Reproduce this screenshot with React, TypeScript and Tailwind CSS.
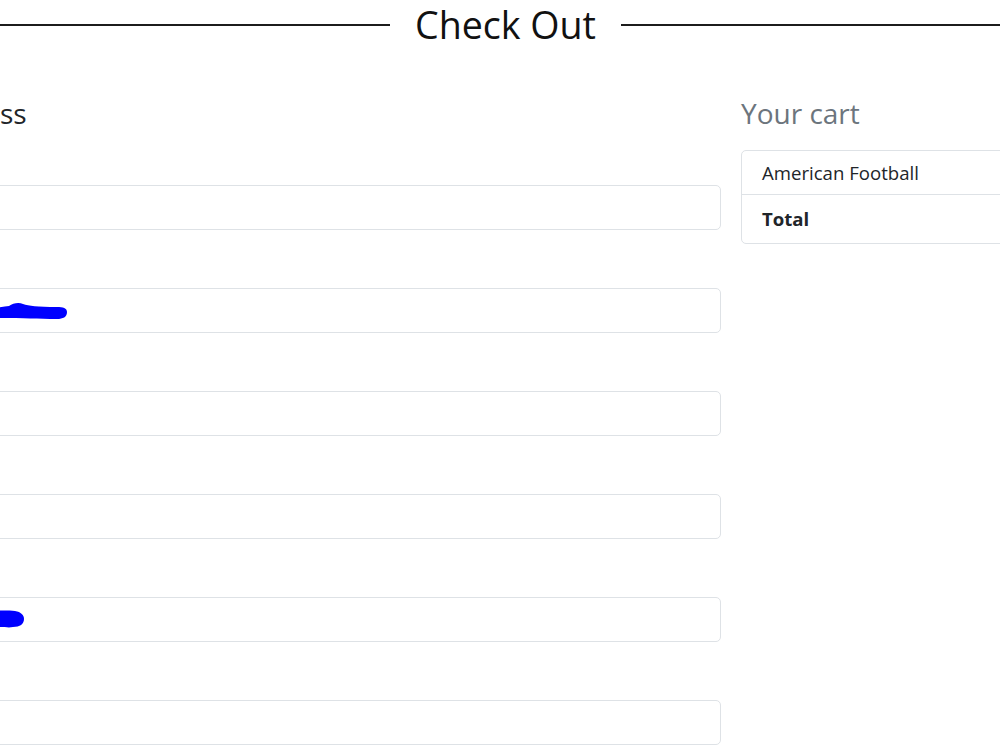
import React from "react";

const fields = [
  { id: "name", label: "Full name", scribble: null },
  { id: "email", label: "Email", scribble: "long" },
  { id: "address", label: "Address", scribble: null },
  { id: "city", label: "City", scribble: null },
  { id: "phone", label: "Phone", scribble: "short" },
  { id: "zip", label: "Zip", scribble: null },
];

function Scribble({ kind }: { kind: string }) {
  // blue pen marks drawn over redacted values
  if (kind === "long") {
    return (
      <svg className="absolute left-[120px] top-[12px]" width="120" height="26" viewBox="0 0 120 26">
        <path
          d="M0 10 C20 9 40 8 52 6 C56 3 62 2 66 4 C72 6 80 7 100 7 C106 7 110 8 110 12 C110 17 106 19 100 19 C80 19 66 18 40 18 C20 18 8 18 0 18 Z"
          fill="#0000ff"
        />
      </svg>
    );
  }
  return (
    <svg className="absolute left-[120px] top-[12px]" width="80" height="22" viewBox="0 0 80 22">
      <path
        d="M0 3 C20 2 48 1 58 2 C64 3 67 6 67 10 C67 15 63 18 56 18 C52 19 48 18 40 18 C20 18 8 18 0 18 Z"
        fill="#0000ff"
      />
    </svg>
  );
}

export default function App() {
  return (
    <div className="w-[1000px] h-[750px] overflow-hidden bg-white text-[#212529] font-['Open_Sans','Noto_Sans',sans-serif]">
      <div className="flex items-center h-[49px] gap-[25px]">
        <div className="w-[390px] shrink-0 h-[2px] bg-[#1c1c1c]" />
        <h1 className="text-[37.6px] leading-none font-normal text-[#111]">Check Out</h1>
        <div className="flex-1 h-[2px] bg-[#1c1c1c]" />
      </div>

      <div className="flex gap-[20px] ml-[-163px] mt-[47px]">
        <div className="w-[884px] shrink-0">
          <h4 className="text-[28px] leading-[34px] font-medium">Billing address</h4>
          <div className="flex flex-col mt-[-3px]">
            {fields.map((f) => (
              <div key={f.id} className="flex flex-col">
                <label className="text-[18px] leading-[26px] mt-[15px] mb-[17px]">{f.label}</label>
                <div className="relative">
                  <div className="h-[45px] rounded-[5px] border border-[#dee2e6] bg-white" />
                  {f.scribble && <Scribble kind={f.scribble} />}
                </div>
              </div>
            ))}
          </div>
        </div>

        <div className="w-[400px] shrink-0">
          <h4 className="text-[28px] leading-[34px] font-medium text-[#6c757d] mb-[20px]">Your cart</h4>
          <ul className="rounded-[5px] border border-[#dee2e6] text-[18.6px]">
            <li className="h-[44px] px-[20px] flex items-center border-b border-[#dee2e6]">American Football</li>
            <li className="h-[48px] px-[20px] flex items-center font-bold">Total</li>
          </ul>
        </div>
      </div>
    </div>
  );
}
